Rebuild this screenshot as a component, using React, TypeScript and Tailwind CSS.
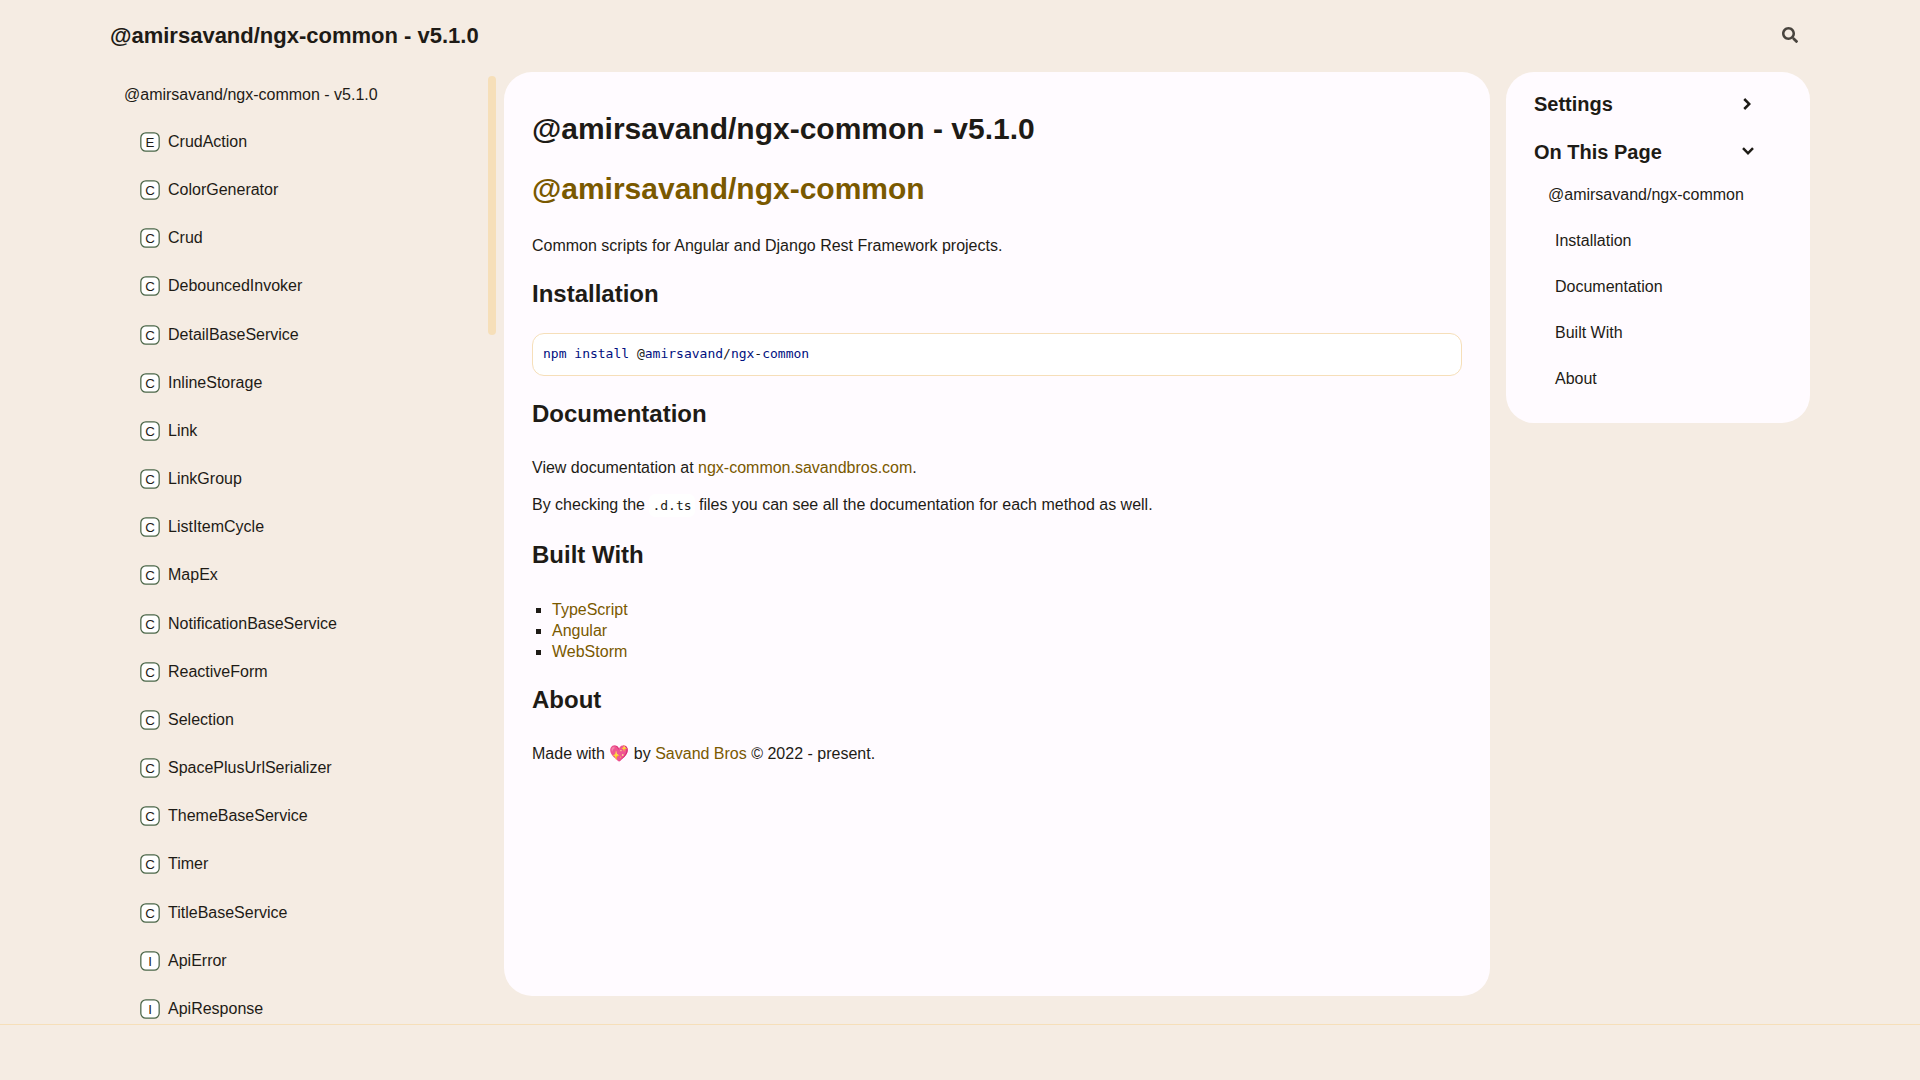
import type { ReactNode } from "react";

const PROJECT = "@amirsavand/ngx-common";
const TITLE = `${PROJECT} - v5.1.0`;

const modules = [
  { kind: "E", name: "CrudAction" },
  { kind: "C", name: "ColorGenerator" },
  { kind: "C", name: "Crud" },
  { kind: "C", name: "DebouncedInvoker" },
  { kind: "C", name: "DetailBaseService" },
  { kind: "C", name: "InlineStorage" },
  { kind: "C", name: "Link" },
  { kind: "C", name: "LinkGroup" },
  { kind: "C", name: "ListItemCycle" },
  { kind: "C", name: "MapEx" },
  { kind: "C", name: "NotificationBaseService" },
  { kind: "C", name: "ReactiveForm" },
  { kind: "C", name: "Selection" },
  { kind: "C", name: "SpacePlusUrlSerializer" },
  { kind: "C", name: "ThemeBaseService" },
  { kind: "C", name: "Timer" },
  { kind: "C", name: "TitleBaseService" },
  { kind: "I", name: "ApiError" },
  { kind: "I", name: "ApiResponse" },
];

const sections = ["Installation", "Documentation", "Built With", "About"];

function KindIcon({ kind }: { kind: string }) {
  return (
    <svg className="h-5 w-5 shrink-0" viewBox="0 0 24 24" aria-hidden="true">
      <rect x="1" y="1" width="22" height="22" rx="6" fill="#fff" stroke="#4a6547" strokeWidth="1.5" />
      <text x="12" y="18" textAnchor="middle" fontSize="16" fill="#1e1b16">
        {kind}
      </text>
    </svg>
  );
}

function Chevron({ className = "" }: { className?: string }) {
  return (
    <svg className={`h-5 w-5 ${className}`} viewBox="0 0 24 24" fill="#1e1b16" aria-hidden="true">
      <path d="M4.93896 8.531L12 15.591L19.061 8.531L16.939 6.409L12 11.349L7.06098 6.409L4.93896 8.531Z" />
    </svg>
  );
}

function SearchIcon() {
  return (
    <svg className="h-4 w-4" viewBox="0 0 16 16" fill="#1e1b16" aria-hidden="true">
      <path d="M15.7824 13.833L12.6666 10.7177C12.5259 10.5771 12.3353 10.499 12.1353 10.499H11.6259C12.4884 9.39596 13.001 8.00859 13.001 6.49937C13.001 2.90909 10.0914 0 6.50048 0C2.90959 0 0 2.90909 0 6.49937C0 10.0896 2.90959 12.9987 6.50048 12.9987C8.00996 12.9987 9.39756 12.4863 10.5008 11.6239V12.1332C10.5008 12.3332 10.5789 12.5238 10.7195 12.6644L13.8354 15.7797C14.1292 16.0734 14.6042 16.0734 14.8948 15.7797L15.7793 14.8954C16.0731 14.6017 16.0731 14.1267 15.7824 13.833ZM6.50048 10.499C4.29094 10.499 2.50018 8.70893 2.50018 6.49937C2.50018 4.29011 4.28781 2.49976 6.50048 2.49976C8.71001 2.49976 10.5008 4.28978 10.5008 6.49937C10.5008 8.70863 8.71314 10.499 6.50048 10.499Z" />
    </svg>
  );
}

function DocLink({ children }: { children: ReactNode }) {
  return (
    <a href="#" className="text-[#7a5900] hover:underline">
      {children}
    </a>
  );
}

function Heading({ children }: { children: ReactNode }) {
  return <h2 className="mt-6 text-2xl leading-7 font-bold">{children}</h2>;
}

export default function App() {
  return (
    <div className="flex min-h-screen flex-col bg-[#f5ece3] font-['Liberation_Sans',Arial,sans-serif] text-base leading-5 text-[#1e1b16]">
      <header className="mx-auto flex h-18 w-full max-w-[1700px] items-center justify-between pr-3">
        <a href="#" className="text-[22px] leading-7 font-bold">
          {TITLE}
        </a>
        <button type="button" aria-label="Search" className="pb-0.5 opacity-80">
          <SearchIcon />
        </button>
      </header>

      <div className="mx-auto flex w-full max-w-[1700px] flex-1">
        <div className="mr-2 flex w-[386px] shrink-0">
          <nav className="flex flex-1 flex-col pt-[13px] pl-[14px]">
            <a href="#">{TITLE}</a>
            <ul className="mt-[27px] flex flex-1 flex-col justify-between pb-[5px] pl-4">
              {modules.map(({ kind, name }) => (
                <li key={name}>
                  <a href="#" className="flex items-center gap-2">
                    <KindIcon kind={kind} />
                    {name}
                  </a>
                </li>
              ))}
            </ul>
          </nav>
          <div className="mt-1 h-[259px] w-2 rounded-full bg-[#f6dfb9]" />
        </div>

        <main className="mr-4 mb-7 min-w-0 flex-1 rounded-[28px] bg-[#fffbff] px-7 pt-[39px]">
          <h1 className="text-3xl leading-9 font-bold">{TITLE}</h1>
          <h1 className="mt-6 text-3xl leading-9 font-bold">
            <DocLink>{PROJECT}</DocLink>
          </h1>
          <p className="mt-[29px]">Common scripts for Angular and Django Rest Framework projects.</p>

          <Heading>Installation</Heading>
          <pre className="mt-[25px] rounded-xl border border-[#f6dfb9] bg-white p-[10px] text-[13px] leading-5">
            <code className="font-['DejaVu_Sans_Mono',monospace]">
              <span className="text-[#001080]">npm</span> <span className="text-[#001080]">install</span> @
              <span className="text-[#001080]">amirsavand</span>/<span className="text-[#001080]">ngx</span>-
              <span className="text-[#001080]">common</span>
            </code>
          </pre>

          <Heading>Documentation</Heading>
          <p className="mt-[30px]">
            View documentation at <DocLink>ngx-common.savandbros.com</DocLink>.
          </p>
          <p className="mt-[17px] pb-px">
            By checking the{" "}
            <code className="rounded-md bg-white px-[3px] py-1 font-['DejaVu_Sans_Mono',monospace] text-[13px]">.d.ts</code>{" "}
            files you can see all the documentation for each method as well.
          </p>

          <Heading>Built With</Heading>
          <ul className="mt-[30px] list-[square] pl-5 leading-[21px]">
            <li>
              <DocLink>TypeScript</DocLink>
            </li>
            <li>
              <DocLink>Angular</DocLink>
            </li>
            <li>
              <DocLink>WebStorm</DocLink>
            </li>
          </ul>

          <Heading>About</Heading>
          <p className="mt-[30px]">
            Made with 💖 by <DocLink>Savand Bros</DocLink> © 2022 - present.
          </p>
        </main>

        <aside className="w-[304px] shrink-0 self-start rounded-[28px] bg-[#fffbff] px-7 pt-5 pb-[21px]">
          <button type="button" className="flex w-full items-center justify-between pr-6 text-xl leading-6 font-bold">
            Settings
            <Chevron className="-rotate-90" />
          </button>
          <button type="button" className="mt-6 flex w-full items-center justify-between pr-6 text-xl leading-6 font-bold">
            On This Page
            <Chevron />
          </button>
          <nav className="pt-2 pl-[14px] leading-[46px]">
            <a href="#" className="block">
              {PROJECT}
            </a>
            <ul className="pl-[7px]">
              {sections.map((name) => (
                <li key={name}>
                  <a href="#" className="block">
                    {name}
                  </a>
                </li>
              ))}
            </ul>
          </nav>
        </aside>
      </div>

      <footer className="h-14 border-t border-[#f6dfb9]" />
    </div>
  );
}
